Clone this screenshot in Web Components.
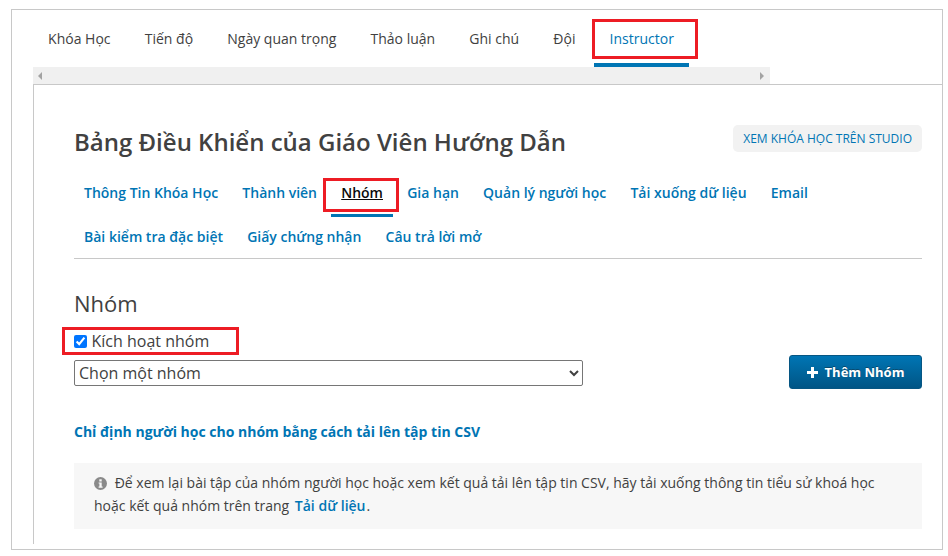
<!DOCTYPE html>
<html lang="vi">
<head>
<meta charset="utf-8">
<title>Nhóm</title>
<style>
    html, body { margin: 0; padding: 0; background: #fff; }
    body { width: 948px; height: 556px; overflow: hidden; font-family: "Open Sans", sans-serif; color: #414141; }
</style>
</head>
<body>
<template id="course-page-template">
    <style>
        :host { display: block; position: relative; box-sizing: border-box; width: 932px; height: 541px; margin: 9px 0 0 11px; border: 1px solid #c8c8c8; overflow: hidden; }
        .panel { box-sizing: border-box; margin-left: 21px; height: 459px; border-left: 1px solid #c8c8c8; padding: 40px 20px 0 40px; }
        .rule { height: 1px; margin-left: 21px; background: #c8c8c8; }
    </style>
    <slot name="tabs"></slot>
    <slot name="scroll"></slot>
    <div class="rule"></div>
    <div class="panel"><slot></slot></div>
</template>

<template id="course-tabs-template">
    <style>
        :host { display: flex; box-sizing: border-box; height: 57px; padding: 0 0 0 19px; gap: 0; }
    </style>
    <slot></slot>
</template>

<template id="course-tab-template">
    <style>
        :host { display: block; box-sizing: border-box; height: 57px; padding: 19px 0 0; margin: 0 17.1px; font-size: 14px; line-height: 20px; color: #414141; white-space: nowrap; }
        :host([active]) { margin: 0 0 0 1px; padding: 19px 15px 0 16px; color: #0075b4; border-bottom: 4px solid #0075b4; width: 95px; }
    </style>
    <slot></slot>
</template>

<template id="scroll-track-template">
    <style>
        :host { display: flex; justify-content: space-between; align-items: center; box-sizing: border-box; width: 737px; height: 17px; margin-left: 21px; padding: 0 6px 0 5px; background: #f0f0f0; }
        i { display: block; width: 0; height: 0; border-style: solid; border-width: 4px 0 4px 4px; border-color: transparent transparent transparent #a3a3a3; }
        i.left { border-width: 4px 4px 4px 0; border-color: transparent #a3a3a3 transparent transparent; }
    </style>
    <i class="left"></i><i></i>
</template>

<template id="dash-header-template">
    <style>
        :host { display: flex; justify-content: space-between; align-items: flex-start; height: 34px; }
        h1 { margin: 0; font-size: 24px; line-height: 34px; font-weight: 600; color: #414141; white-space: nowrap; }
        a { box-sizing: border-box; height: 27px; margin-top: 0; padding: 0 10px; font-size: 12px; line-height: 27px; color: #0075b4; background: #f2f2f2; border-radius: 5px; white-space: nowrap; }
    </style>
    <h1><slot></slot></h1>
    <a><slot name="action"></slot></a>
</template>

<template id="dash-nav-template">
    <style>
        :host { display: flex; flex-wrap: wrap; box-sizing: border-box; margin-top: 16px; height: 84px; border-bottom: 1px solid #c8c8c8; align-content: flex-start; }
    </style>
    <slot></slot>
</template>

<template id="dash-nav-item-template">
    <style>
        :host { display: block; box-sizing: border-box; height: 44px; padding: 8px 10px 0; margin-right: 4.2px; font-size: 14px; line-height: 20px; font-weight: 600; color: #0075b4; white-space: nowrap; }
        :host([active]) { color: #0a0a0a; position: relative; }
        :host([active]) span { text-decoration: underline; }
        :host([active])::after { content: ""; position: absolute; left: 0; right: 0; top: 39px; height: 3px; background: #0075b4; }
    </style>
    <span><slot></slot></span>
</template>

<template id="cohort-section-template">
    <style>
        :host { display: block; }
        h2 { margin: 28px 0 0; font-size: 22px; line-height: 32px; font-weight: 400; color: #414141; }
        label { display: flex; align-items: center; height: 24px; margin-top: 10px; font-size: 16px; color: #414141; }
        input[type=checkbox] { width: 13px; height: 13px; margin: 0 4.5px 0 0; accent-color: #0075ff; }
        .row { display: flex; justify-content: space-between; align-items: flex-start; margin-top: 2px; }
        select { box-sizing: border-box; width: 509px; height: 26px; margin-top: 5px; padding: 0; font: 16px "Open Sans", sans-serif; color: #414141; background: #fff; border: 1px solid #767676; border-radius: 2px; }
        button { box-sizing: border-box; width: 133px; height: 34px; display: flex; justify-content: center; align-items: center; gap: 7px; padding: 0; font: 700 13px "Open Sans", sans-serif; color: #fff; border: 1px solid #065683; border-radius: 3px; background: linear-gradient(#0075b4, #005585); text-shadow: 0 -1px 0 #0a4a6e; }
        svg { display: block; }
        .csv { display: block; margin-top: 33px; font-size: 14px; line-height: 20px; font-weight: 700; color: #0075b4; }
    </style>
    <h2><slot name="title"></slot></h2>
    <label><input type="checkbox" checked><slot name="toggle"></slot></label>
    <div class="row">
        <select><option>Chọn một nhóm</option></select>
        <button><svg width="11" height="11" viewBox="0 0 11 11"><path d="M4 0h3v4h4v3H7v4H4V7H0V4h4z" fill="#fff"/></svg><slot name="add"></slot></button>
    </div>
    <a class="csv"><slot name="csv"></slot></a>
</template>

<template id="info-note-template">
    <style>
        :host { display: block; box-sizing: border-box; height: 66px; margin-top: 21px; padding: 8px 20px 0; background: #f7f7f7; font-size: 14px; line-height: 23px; color: #414141; }
        svg { vertical-align: -2px; margin-right: 4px; }
    </style>
    <svg width="13" height="13" viewBox="0 0 13 13"><circle cx="6.5" cy="6.5" r="6.5" fill="#8a8a8a"/><rect x="5.3" y="2.3" width="2.4" height="2.2" fill="#f7f7f7"/><path d="M4.6 5.4h3.1v4.2h.9v1.1H4.6V9.6h.8V6.5h-.8z" fill="#f7f7f7"/></svg>
    <slot></slot>
</template>

<!-- no whitespace round the slot: it is inline and the space would show before the full stop -->
<template id="note-link-template"><style>
        :host { display: inline; font-weight: 600; color: #0075b4; margin: 0 1px 0 2px; }
    </style><slot></slot></template>

<template id="mark-box-template">
    <style>
        :host { display: block; position: absolute; box-sizing: border-box; border: 3px solid #ed1c24; pointer-events: none; }
    </style>
</template>

<course-page>
    <course-tabs slot="tabs">
        <course-tab>Khóa Học</course-tab>
        <course-tab>Tiến độ</course-tab>
        <course-tab>Ngày quan trọng</course-tab>
        <course-tab>Thảo luận</course-tab>
        <course-tab>Ghi chú</course-tab>
        <course-tab>Đội</course-tab>
        <course-tab active>Instructor</course-tab>
    </course-tabs>
    <scroll-track slot="scroll"></scroll-track>

    <dash-header>Bảng Điều Khiển của Giáo Viên Hướng Dẫn<span slot="action">XEM KHÓA HỌC TRÊN STUDIO</span></dash-header>
    <dash-nav>
        <dash-nav-item>Thông Tin Khóa Học</dash-nav-item>
        <dash-nav-item>Thành viên</dash-nav-item>
        <dash-nav-item active>Nhóm</dash-nav-item>
        <dash-nav-item>Gia hạn</dash-nav-item>
        <dash-nav-item>Quản lý người học</dash-nav-item>
        <dash-nav-item>Tải xuống dữ liệu</dash-nav-item>
        <dash-nav-item>Email</dash-nav-item>
        <dash-nav-item>Bài kiểm tra đặc biệt</dash-nav-item>
        <dash-nav-item>Giấy chứng nhận</dash-nav-item>
        <dash-nav-item>Câu trả lời mở</dash-nav-item>
    </dash-nav>
    <cohort-section>
        <span slot="title">Nhóm</span>
        <span slot="toggle">Kích hoạt nhóm</span>
        <span slot="add">Thêm Nhóm</span>
        <span slot="csv">Chỉ định người học cho nhóm bằng cách tải lên tập tin CSV</span>
    </cohort-section>
    <info-note>Để xem lại bài tập của nhóm người học hoặc xem kết quả tải lên tập tin CSV, hãy tải xuống thông tin tiểu sử khoá học hoặc kết quả nhóm trên trang <note-link>Tải dữ liệu</note-link>.</info-note>
</course-page>

<mark-box style="left:592px;top:19px;width:106px;height:40px"></mark-box>
<mark-box style="left:323px;top:178px;width:76px;height:34px"></mark-box>
<mark-box style="left:62px;top:327px;width:177px;height:28px"></mark-box>

<script>
    // every element here is just a template clone, so register them from one list
    const elements = ["course-page", "course-tabs", "course-tab", "scroll-track", "dash-header", "dash-nav", "dash-nav-item", "cohort-section", "info-note", "note-link", "mark-box"];

    for (const name of elements) {
        customElements.define(
            name,
            class extends HTMLElement {
                constructor() {
                    super();
                    const template_clone = document.getElementById(name + "-template").content.cloneNode(true);
                    this.attachShadow({ mode: "open" }).append(template_clone);
                }
            },
        );
    }
</script>
</body>
</html>
